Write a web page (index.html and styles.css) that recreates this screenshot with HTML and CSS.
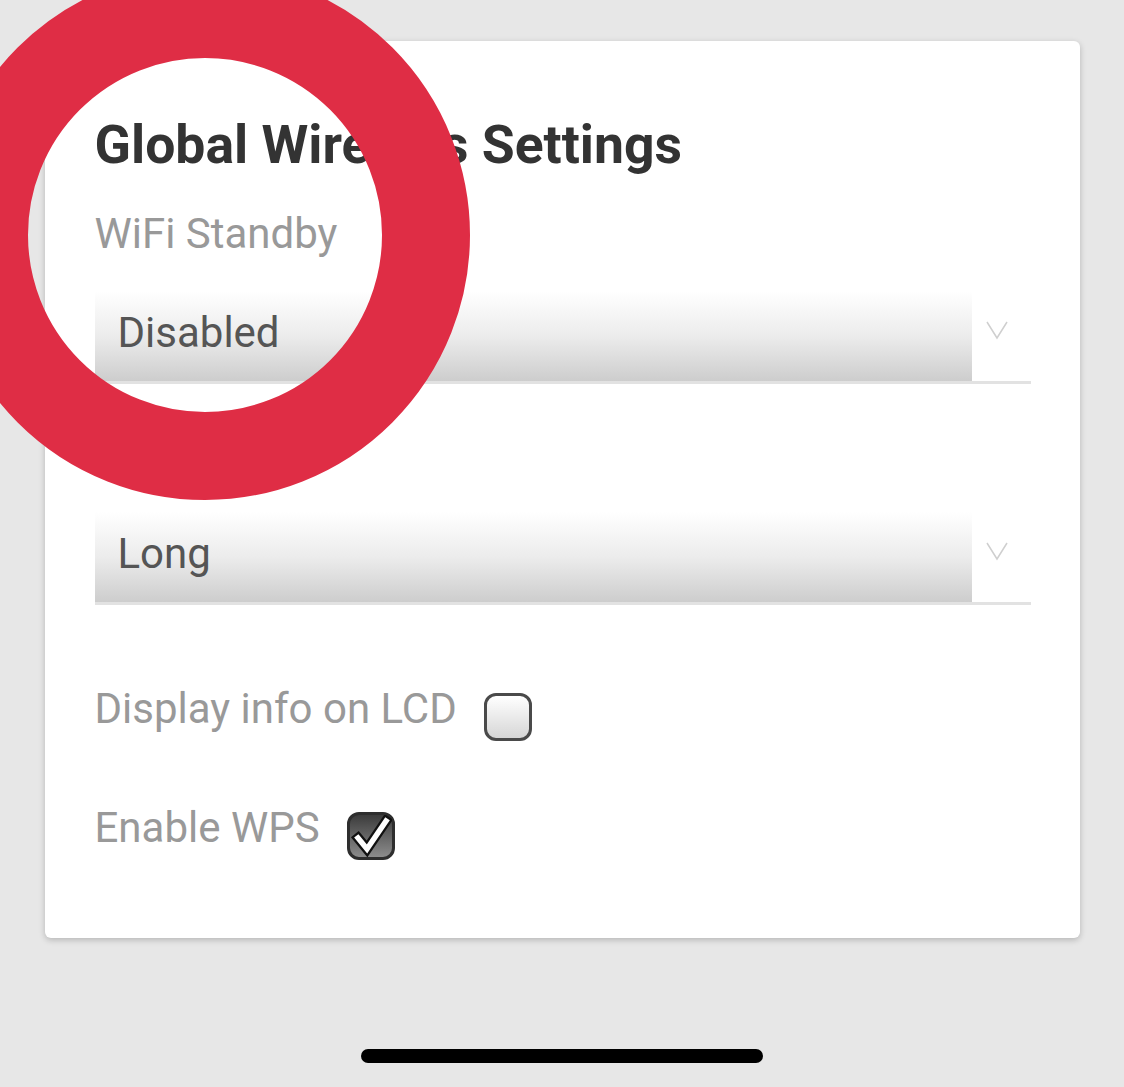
FILE: index.html
```html
<!DOCTYPE html>
<html lang="en">
<head>
    <meta charset="UTF-8">
    <meta name="viewport" content="width=device-width, initial-scale=1.0">
    <title>Global Wireless Settings</title>
    <link rel="stylesheet" href="styles.css">
</head>
<body>

<div class="page">
    <div class="card">
        <h1>Global Wireless Settings</h1>

        <div class="field">
            <label class="field-label" for="standby">WiFi Standby</label>
            <div class="select" id="standby">
                <div class="select-value">Disabled</div>
                <div class="select-arrow">
                    <svg width="22" height="20" viewBox="0 0 22 20"><polyline points="1,2 11,18 21,2" fill="none" stroke="#cfcfcf" stroke-width="1.5"/></svg>
                </div>
            </div>
        </div>

        <div class="field">
            <label class="field-label" for="preamble">Preamble</label>
            <div class="select" id="preamble">
                <div class="select-value">Long</div>
                <div class="select-arrow">
                    <svg width="22" height="20" viewBox="0 0 22 20"><polyline points="1,2 11,18 21,2" fill="none" stroke="#cfcfcf" stroke-width="1.5"/></svg>
                </div>
            </div>
        </div>

        <div class="check-row first">
            <span class="check-label">Display info on LCD</span>
            <span class="checkbox"></span>
        </div>

        <div class="check-row">
            <span class="check-label">Enable WPS</span>
            <span class="checkbox checked">
                <svg width="42" height="42" viewBox="0 0 42 42">
                    <polyline points="8,23 17,34 36,6" fill="none" stroke="#111" stroke-width="10" stroke-linejoin="miter" stroke-linecap="square"/>
                    <polyline points="8,23 17,34 36,6" fill="none" stroke="#fff" stroke-width="5.5" stroke-linejoin="miter" stroke-linecap="square"/>
                </svg>
            </span>
        </div>
    </div>

    <div class="home-bar"></div>
</div>

<!-- annotation ring drawn over the screenshot -->
<div class="ring"></div>

</body>
</html>
```

FILE: styles.css
```css
body {
    font-family: Roboto, "Liberation Sans", Arial, sans-serif;
    background-color: #e7e7e7;
    margin: 0;
    padding: 0;
    overflow: hidden;
}

.page {
    height: 1087px;
    padding-top: 41px;
    box-sizing: border-box;
    display: flex;
    flex-direction: column;
    align-items: center;
}

.card {
    width: 1035px;
    height: 897px;
    box-sizing: border-box;
    background-color: white;
    border-radius: 6px;
    padding: 76px 49px 0 50px;
    box-shadow: 0 2px 6px rgba(0, 0, 0, 0.22);
}

h1 {
    margin: 0;
    font-size: 53.5px;
    line-height: 56px;
    font-weight: 700;
    color: #333;
}

.field {
    margin-top: 40px;
}

.field + .field {
    margin-top: 50px;
}

.field-label {
    display: block;
    font-size: 42px;
    line-height: 42px;
    color: #999;
}

.select {
    display: flex;
    margin-top: 36px;
    height: 93px;
    box-sizing: border-box;
    border-bottom: 3px solid #e2e2e2;
}

.select-value {
    flex: 1;
    display: flex;
    align-items: center;
    padding: 0 0 6px 23px;
    font-size: 42px;
    line-height: 42px;
    color: #555;
    background: linear-gradient(#ffffff, #ececec 50%, #cdcdcd);
}

.select-arrow {
    width: 59px;
    display: flex;
    justify-content: center;
    padding-top: 29px;
    padding-right: 8px;
    box-sizing: border-box;
}

.check-row {
    display: flex;
    align-items: flex-start;
    gap: 27px;
    margin-top: 66px;
}

.check-row.first {
    margin-top: 83px;
}

.check-label {
    font-size: 42px;
    line-height: 42px;
    color: #999;
}

.checkbox {
    width: 48px;
    height: 48px;
    margin-top: 5px;
    box-sizing: border-box;
    border: 3px solid #4a4a4a;
    border-radius: 12px;
    background: linear-gradient(#ffffff, #d6d6d6);
    display: flex;
    align-items: center;
    justify-content: center;
}

.checkbox.checked {
    border-color: #2e2e2e;
    background: linear-gradient(#3c3c3c, #8c8c8c);
}

.home-bar {
    width: 402px;
    height: 14px;
    margin-top: 111px;
    border-radius: 7px;
    background-color: #000;
}

.ring {
    position: absolute;
    left: -60px;
    top: -30px;
    width: 530px;
    height: 530px;
    box-sizing: border-box;
    border: 88px solid #df2d45;
    border-radius: 50%;
}
```
